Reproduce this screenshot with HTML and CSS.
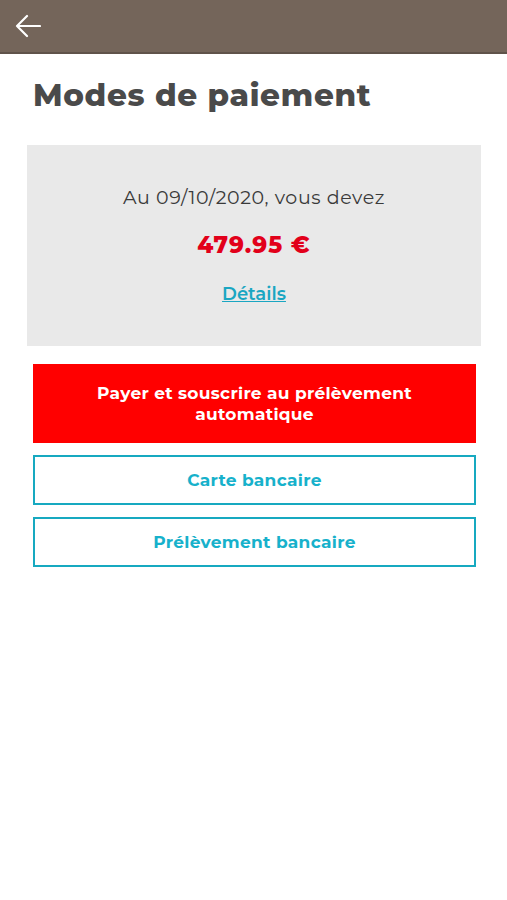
FILE: index.html
```html
<!DOCTYPE html>
<html lang="fr">
  <head>
    <meta charset="UTF-8" />
    <meta name="viewport" content="width=device-width, initial-scale=1.0" />
    <title>Modes de paiement</title>
    <link rel="stylesheet" href="styles.css">
  </head>
  <body>
    <header class="topbar">
      <button class="back" aria-label="Retour">
        <svg width="26" height="24" viewBox="0 0 26 24">
          <path d="M12 2 L2 12 L12 22 M2 12 H25" fill="none" stroke="#fff" stroke-width="2.2" stroke-linecap="round" stroke-linejoin="round" />
        </svg>
      </button>
    </header>

    <main class="page">
      <h1>Modes de paiement</h1>

      <div class="summary">
        <p class="due">Au 09/10/2020, vous devez</p>
        <p class="amount">479.95 €</p>
        <a class="details" href="#">Détails</a>
      </div>

      <div class="actions">
        <button class="btn btn-primary">Payer et souscrire au prélèvement<br />automatique</button>
        <button class="btn btn-outline">Carte bancaire</button>
        <button class="btn btn-outline">Prélèvement bancaire</button>
      </div>
    </main>
  </body>
</html>
```

FILE: styles.css
```css
body {
  margin: 0;
  font-family: "Montserrat", "Lato", "Open Sans", sans-serif;
  background-color: #fff;
  color: #333;
}
.topbar {
  height: 52px;
  background-color: #74655a; /* brown bar */
  border-bottom: 2px solid #5f534a;
  display: flex;
  align-items: center;
  padding-left: 15px;
}
.back {
  background: none;
  border: none;
  padding: 0;
  display: flex;
  cursor: pointer;
}
.page {
  padding: 0 27px 0 27px;
}
h1 {
  margin: 22px 0 31px 6px;
  font-size: 31px;
  font-weight: 800;
  color: #4a4a4a;
  letter-spacing: 0.7px;
}
.summary {
  background-color: #e9e9e9;
  padding: 41px 0 41px;
  text-align: center;
  margin-right: -1px;
}
.due {
  margin: 0;
  font-size: 19px;
  color: #3a3a3a;
  letter-spacing: 0.6px;
}
.amount {
  margin: 22px 0 24px;
  font-size: 23px;
  font-weight: 800;
  color: #e2001a;
  letter-spacing: 1px;
}
.details {
  font-size: 18px;
  font-weight: 600;
  color: #1aa6c2;
  text-decoration: underline;
}
.actions {
  display: flex;
  flex-direction: column;
  gap: 12px;
  margin: 18px 4px 0 6px;
}
.btn {
  font-family: inherit;
  font-size: 17px;
  font-weight: 700;
  cursor: pointer;
  border-radius: 0;
  letter-spacing: 0.3px;
}
.btn-primary {
  background-color: #ff0000;
  color: #fff;
  border: none;
  height: 79px;
  line-height: 21px;
}
.btn-outline {
  background-color: #fff;
  color: #17b1cb;
  border: 2px solid #17a9c0;
  height: 50px;
}
```
